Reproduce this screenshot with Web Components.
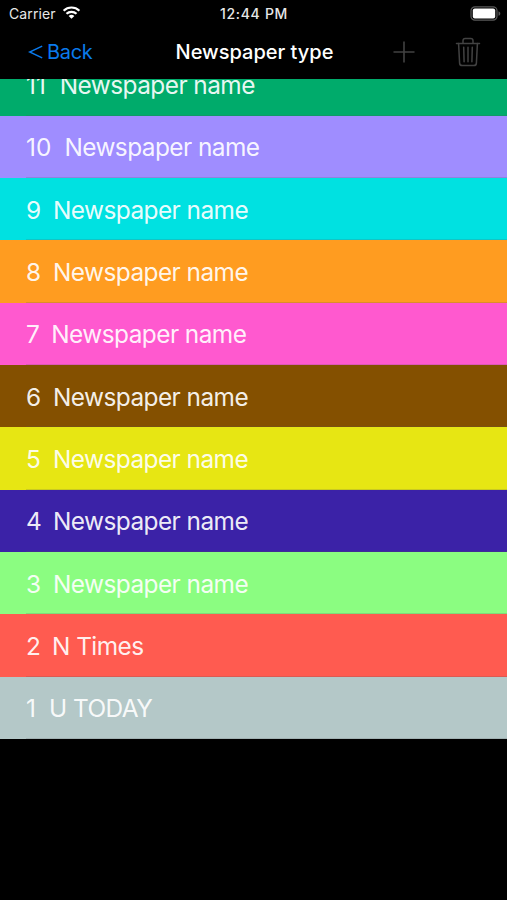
<!DOCTYPE html>
<html lang="en">
<head>
<meta charset="utf-8">
<title>Newspaper type</title>
<style>
    body {
        margin: 0;
        background: #000;
        font-family: Inter, "Liberation Sans", sans-serif;
        color: #fff;
    }
</style>
</head>
<body>
<phone-screen>
    <status-bar slot="top" carrier="Carrier" time="12:44 PM"></status-bar>
    <nav-bar slot="top" back="Back">Newspaper type</nav-bar>
    <newspaper-row number="11" color="#00ab6b" style="--num: 33.8px">Newspaper name</newspaper-row>
    <newspaper-row number="10" color="#9f8dff" style="--num: 38.4px">Newspaper name</newspaper-row>
    <newspaper-row number="9" color="#00e1e1">Newspaper name</newspaper-row>
    <newspaper-row number="8" color="#ff9c20">Newspaper name</newspaper-row>
    <newspaper-row number="7" color="#ff59cf" style="--num: 25.3px">Newspaper name</newspaper-row>
    <newspaper-row number="6" color="#845000">Newspaper name</newspaper-row>
    <newspaper-row number="5" color="#e7e613">Newspaper name</newspaper-row>
    <newspaper-row number="4" color="#3b22a7">Newspaper name</newspaper-row>
    <newspaper-row number="3" color="#8bfd81">Newspaper name</newspaper-row>
    <newspaper-row number="2" color="#ff5b50" style="--num: 26px">N Times</newspaper-row>
    <newspaper-row number="1" color="#b4c8c8" style="--num: 23px">U TODAY</newspaper-row>
</phone-screen>

<script>
class PhoneScreen extends HTMLElement {
    constructor() {
        super();
        this.attachShadow({ mode: 'open' });
    }

    connectedCallback() {
        this.shadowRoot.innerHTML =
        `<style>
            :host {
                display: flex;
                flex-direction: column;
                height: 900px;
                overflow: hidden;
            }
            .list {
                flex: 1;
                min-height: 0;
                overflow: hidden;
            }
            /* the list is scrolled, its first row is partly under the bar */
            .rows {
                margin-top: -25.8px;
            }
        </style>
        <slot name="top"></slot>
        <div class="list"><div class="rows"><slot></slot></div></div>
        `;
    }
}
customElements.define('phone-screen', PhoneScreen);

class StatusBar extends HTMLElement {
    constructor() {
        super();
        this.attachShadow({ mode: 'open' });
    }

    connectedCallback() {
        this.shadowRoot.innerHTML =
        `<style>
            :host {
                display: grid;
                grid-template-columns: 1fr auto 1fr;
                align-items: center;
                flex: none;
                box-sizing: border-box;
                height: 27px;
                padding: 0 6px 0 9px;
                font-size: 14px;
                color: #e8e8e8;
            }
            .left {
                display: flex;
                align-items: center;
                gap: 6px;
                letter-spacing: 0.1px;
            }
            .left svg {
                margin-top: -2px;
            }
            .time {
                font-weight: 500;
                font-size: 14px;
                letter-spacing: 0.7px;
                margin-left: -2px;
            }
            .battery {
                justify-self: end;
                margin-top: -1px;
            }
            svg {
                display: block;
            }
        </style>
        <div class="left">
            <span>${this.getAttribute('carrier')}</span>
            <svg width="19" height="15" viewBox="0 0 20 15" fill="none" stroke="#fff" stroke-width="2.3">
                <path d="M1.7 5.6a12 12 0 0 1 16.6 0M4.7 8.9a7.6 7.6 0 0 1 10.6 0"/>
                <path d="M10 14.2l-3-3a4.3 4.3 0 0 1 6 0z" fill="#fff" stroke="none"/>
            </svg>
        </div>
        <span class="time">${this.getAttribute('time')}</span>
        <svg class="battery" width="31" height="15" viewBox="0 0 31 15">
            <rect x="1" y="0.8" width="26" height="13.4" rx="4" fill="none" stroke="#5a5a5a" stroke-width="1.2"/>
            <rect x="2.8" y="2.6" width="22.4" height="9.8" rx="2" fill="#fff"/>
            <path d="M28.5 5.2v4.6c1.1-.4 1.8-1.3 1.8-2.3s-.7-1.9-1.8-2.3z" fill="#5a5a5a"/>
        </svg>
        `;
    }
}
customElements.define('status-bar', StatusBar);

class NavBar extends HTMLElement {
    constructor() {
        super();
        this.attachShadow({ mode: 'open' });
    }

    connectedCallback() {
        this.shadowRoot.innerHTML =
        `<style>
            :host {
                display: grid;
                grid-template-columns: 1fr auto 1fr;
                align-items: center;
                flex: none;
                box-sizing: border-box;
                height: 52px;
                padding: 0 26px 2px 28px;
            }
            .back {
                display: flex;
                align-items: center;
                gap: 4px;
                color: #0a7aec;
                font-size: 20px;
                letter-spacing: -0.3px;
            }
            .title {
                font-weight: 550;
                font-size: 20px;
                letter-spacing: 0;
            }
            .tools {
                display: flex;
                align-items: center;
                justify-content: flex-end;
                gap: 40px;
            }
            svg {
                display: block;
            }
        </style>
        <div class="back">
            <svg width="15" height="14" viewBox="0 0 15 14" fill="none" stroke="currentColor" stroke-width="1.5">
                <path d="M14.2 1.1L1.6 7l12.6 5.9"/>
            </svg>
            <span>${this.getAttribute('back')}</span>
        </div>
        <span class="title"><slot></slot></span>
        <div class="tools">
            <svg width="22" height="22" viewBox="0 0 22 22" stroke="#424242" stroke-width="1.6">
                <path d="M11 .5v21M.5 11h21"/>
            </svg>
            <svg width="26" height="30" viewBox="0 0 26 30" fill="none" stroke="#424242" stroke-width="1.5" stroke-linecap="round" stroke-linejoin="round">
                <path d="M1.5 6.4h23M8 6.2V3.7c0-1.4.9-2.2 2.3-2.2h5.4c1.4 0 2.3.8 2.3 2.2v2.5"/>
                <path d="M3.6 6.6l1 19.5c.1 1.6 1.1 2.5 2.6 2.5h11.6c1.5 0 2.5-.9 2.6-2.5l1-19.5"/>
                <path d="M8.7 10.3l.4 14.4M13 10.3v14.4M17.3 10.3l-.4 14.4"/>
            </svg>
        </div>
        `;
    }
}
customElements.define('nav-bar', NavBar);

class NewspaperRow extends HTMLElement {
    constructor() {
        super();
        this.attachShadow({ mode: 'open' });
    }

    connectedCallback() {
        this.shadowRoot.innerHTML =
        `<style>
            :host {
                display: flex;
                flex-direction: column;
                height: 62.35px;
                background: ${this.getAttribute('color')};
            }
            .row {
                flex: 1;
                display: flex;
                align-items: center;
                padding: 2px 0 0 26px;
                font-size: 24.4px;
                line-height: 30px;
                letter-spacing: -0.55px;
                white-space: nowrap;
                color: rgba(255, 255, 255, 0.93);
            }
            .number {
                width: var(--num, 27px);
                letter-spacing: 0;
            }
            .line {
                height: 1px;
                margin-left: 26px;
                background: rgba(84, 84, 88, 0.2);
            }
        </style>
        <div class="row">
            <span class="number">${this.getAttribute('number')}</span>
            <span><slot></slot></span>
        </div>
        <div class="line"></div>
        `;
    }
}
customElements.define('newspaper-row', NewspaperRow);
</script>
</body>
</html>
